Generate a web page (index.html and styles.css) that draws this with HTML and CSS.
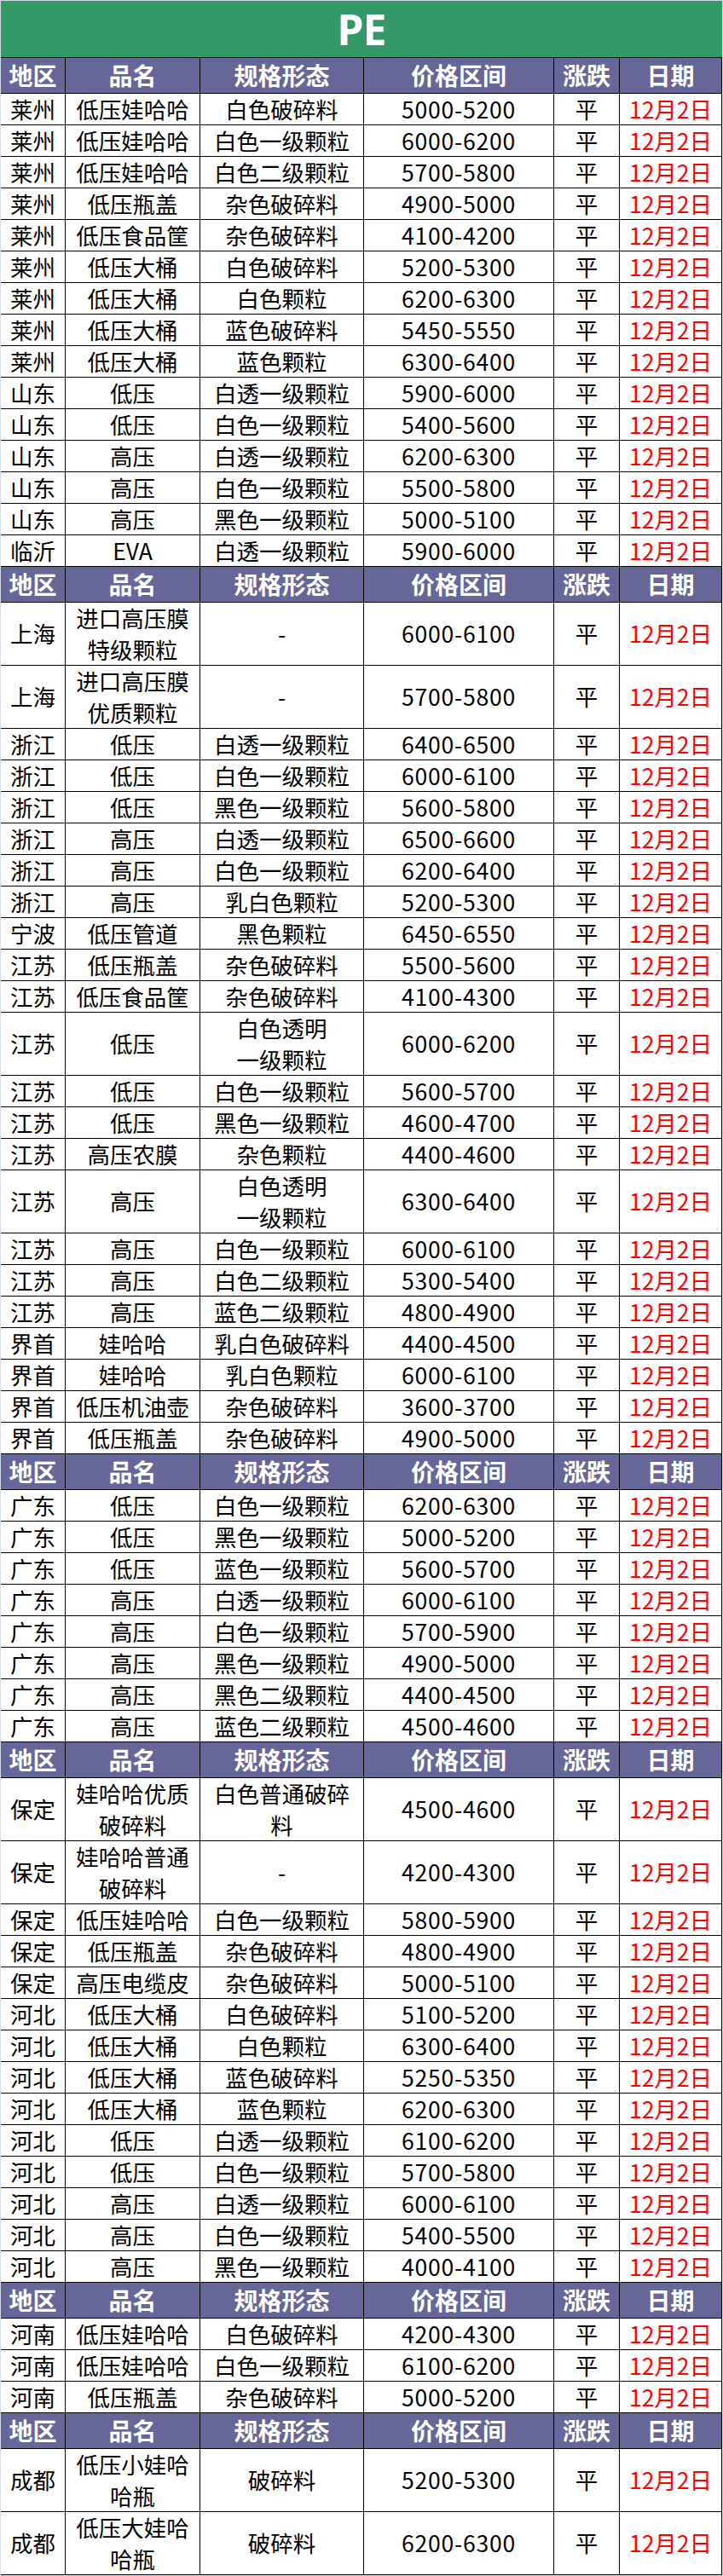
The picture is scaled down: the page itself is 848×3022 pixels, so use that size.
FILE: index.html
```html
<!DOCTYPE html>
<html lang="zh-CN">
<head>
<meta charset="utf-8">
<title>PE</title>
<link rel="stylesheet" href="styles.css">
</head>
<body>
<div class="sheet">
  <div class="title">PE</div>

  <div class="row hd"><div>地区</div><div>品名</div><div>规格形态</div><div>价格区间</div><div>涨跌</div><div>日期</div></div>
  <div class="row"><div>莱州</div><div>低压娃哈哈</div><div>白色破碎料</div><div class="num">5000-5200</div><div>平</div><div class="date">12月2日</div></div>
  <div class="row"><div>莱州</div><div>低压娃哈哈</div><div>白色一级颗粒</div><div class="num">6000-6200</div><div>平</div><div class="date">12月2日</div></div>
  <div class="row"><div>莱州</div><div>低压娃哈哈</div><div>白色二级颗粒</div><div class="num">5700-5800</div><div>平</div><div class="date">12月2日</div></div>
  <div class="row"><div>莱州</div><div>低压瓶盖</div><div>杂色破碎料</div><div class="num">4900-5000</div><div>平</div><div class="date">12月2日</div></div>
  <div class="row"><div>莱州</div><div>低压食品筐</div><div>杂色破碎料</div><div class="num">4100-4200</div><div>平</div><div class="date">12月2日</div></div>
  <div class="row"><div>莱州</div><div>低压大桶</div><div>白色破碎料</div><div class="num">5200-5300</div><div>平</div><div class="date">12月2日</div></div>
  <div class="row"><div>莱州</div><div>低压大桶</div><div>白色颗粒</div><div class="num">6200-6300</div><div>平</div><div class="date">12月2日</div></div>
  <div class="row"><div>莱州</div><div>低压大桶</div><div>蓝色破碎料</div><div class="num">5450-5550</div><div>平</div><div class="date">12月2日</div></div>
  <div class="row"><div>莱州</div><div>低压大桶</div><div>蓝色颗粒</div><div class="num">6300-6400</div><div>平</div><div class="date">12月2日</div></div>
  <div class="row"><div>山东</div><div>低压</div><div>白透一级颗粒</div><div class="num">5900-6000</div><div>平</div><div class="date">12月2日</div></div>
  <div class="row"><div>山东</div><div>低压</div><div>白色一级颗粒</div><div class="num">5400-5600</div><div>平</div><div class="date">12月2日</div></div>
  <div class="row"><div>山东</div><div>高压</div><div>白透一级颗粒</div><div class="num">6200-6300</div><div>平</div><div class="date">12月2日</div></div>
  <div class="row"><div>山东</div><div>高压</div><div>白色一级颗粒</div><div class="num">5500-5800</div><div>平</div><div class="date">12月2日</div></div>
  <div class="row"><div>山东</div><div>高压</div><div>黑色一级颗粒</div><div class="num">5000-5100</div><div>平</div><div class="date">12月2日</div></div>
  <div class="row"><div>临沂</div><div>EVA</div><div>白透一级颗粒</div><div class="num">5900-6000</div><div>平</div><div class="date">12月2日</div></div>

  <div class="row hd"><div>地区</div><div>品名</div><div>规格形态</div><div>价格区间</div><div>涨跌</div><div>日期</div></div>
  <div class="row dbl"><div>上海</div><div>进口高压膜<br>特级颗粒</div><div>-</div><div class="num">6000-6100</div><div>平</div><div class="date">12月2日</div></div>
  <div class="row dbl"><div>上海</div><div>进口高压膜<br>优质颗粒</div><div>-</div><div class="num">5700-5800</div><div>平</div><div class="date">12月2日</div></div>
  <div class="row"><div>浙江</div><div>低压</div><div>白透一级颗粒</div><div class="num">6400-6500</div><div>平</div><div class="date">12月2日</div></div>
  <div class="row"><div>浙江</div><div>低压</div><div>白色一级颗粒</div><div class="num">6000-6100</div><div>平</div><div class="date">12月2日</div></div>
  <div class="row"><div>浙江</div><div>低压</div><div>黑色一级颗粒</div><div class="num">5600-5800</div><div>平</div><div class="date">12月2日</div></div>
  <div class="row"><div>浙江</div><div>高压</div><div>白透一级颗粒</div><div class="num">6500-6600</div><div>平</div><div class="date">12月2日</div></div>
  <div class="row"><div>浙江</div><div>高压</div><div>白色一级颗粒</div><div class="num">6200-6400</div><div>平</div><div class="date">12月2日</div></div>
  <div class="row"><div>浙江</div><div>高压</div><div>乳白色颗粒</div><div class="num">5200-5300</div><div>平</div><div class="date">12月2日</div></div>
  <div class="row"><div>宁波</div><div>低压管道</div><div>黑色颗粒</div><div class="num">6450-6550</div><div>平</div><div class="date">12月2日</div></div>
  <div class="row"><div>江苏</div><div>低压瓶盖</div><div>杂色破碎料</div><div class="num">5500-5600</div><div>平</div><div class="date">12月2日</div></div>
  <div class="row"><div>江苏</div><div>低压食品筐</div><div>杂色破碎料</div><div class="num">4100-4300</div><div>平</div><div class="date">12月2日</div></div>
  <div class="row dbl"><div>江苏</div><div>低压</div><div>白色透明<br>一级颗粒</div><div class="num">6000-6200</div><div>平</div><div class="date">12月2日</div></div>
  <div class="row"><div>江苏</div><div>低压</div><div>白色一级颗粒</div><div class="num">5600-5700</div><div>平</div><div class="date">12月2日</div></div>
  <div class="row"><div>江苏</div><div>低压</div><div>黑色一级颗粒</div><div class="num">4600-4700</div><div>平</div><div class="date">12月2日</div></div>
  <div class="row"><div>江苏</div><div>高压农膜</div><div>杂色颗粒</div><div class="num">4400-4600</div><div>平</div><div class="date">12月2日</div></div>
  <div class="row dbl"><div>江苏</div><div>高压</div><div>白色透明<br>一级颗粒</div><div class="num">6300-6400</div><div>平</div><div class="date">12月2日</div></div>
  <div class="row"><div>江苏</div><div>高压</div><div>白色一级颗粒</div><div class="num">6000-6100</div><div>平</div><div class="date">12月2日</div></div>
  <div class="row"><div>江苏</div><div>高压</div><div>白色二级颗粒</div><div class="num">5300-5400</div><div>平</div><div class="date">12月2日</div></div>
  <div class="row"><div>江苏</div><div>高压</div><div>蓝色二级颗粒</div><div class="num">4800-4900</div><div>平</div><div class="date">12月2日</div></div>
  <div class="row"><div>界首</div><div>娃哈哈</div><div>乳白色破碎料</div><div class="num">4400-4500</div><div>平</div><div class="date">12月2日</div></div>
  <div class="row"><div>界首</div><div>娃哈哈</div><div>乳白色颗粒</div><div class="num">6000-6100</div><div>平</div><div class="date">12月2日</div></div>
  <div class="row"><div>界首</div><div>低压机油壶</div><div>杂色破碎料</div><div class="num">3600-3700</div><div>平</div><div class="date">12月2日</div></div>
  <div class="row"><div>界首</div><div>低压瓶盖</div><div>杂色破碎料</div><div class="num">4900-5000</div><div>平</div><div class="date">12月2日</div></div>

  <div class="row hd"><div>地区</div><div>品名</div><div>规格形态</div><div>价格区间</div><div>涨跌</div><div>日期</div></div>
  <div class="row"><div>广东</div><div>低压</div><div>白色一级颗粒</div><div class="num">6200-6300</div><div>平</div><div class="date">12月2日</div></div>
  <div class="row"><div>广东</div><div>低压</div><div>黑色一级颗粒</div><div class="num">5000-5200</div><div>平</div><div class="date">12月2日</div></div>
  <div class="row"><div>广东</div><div>低压</div><div>蓝色一级颗粒</div><div class="num">5600-5700</div><div>平</div><div class="date">12月2日</div></div>
  <div class="row"><div>广东</div><div>高压</div><div>白透一级颗粒</div><div class="num">6000-6100</div><div>平</div><div class="date">12月2日</div></div>
  <div class="row"><div>广东</div><div>高压</div><div>白色一级颗粒</div><div class="num">5700-5900</div><div>平</div><div class="date">12月2日</div></div>
  <div class="row"><div>广东</div><div>高压</div><div>黑色一级颗粒</div><div class="num">4900-5000</div><div>平</div><div class="date">12月2日</div></div>
  <div class="row"><div>广东</div><div>高压</div><div>黑色二级颗粒</div><div class="num">4400-4500</div><div>平</div><div class="date">12月2日</div></div>
  <div class="row"><div>广东</div><div>高压</div><div>蓝色二级颗粒</div><div class="num">4500-4600</div><div>平</div><div class="date">12月2日</div></div>

  <div class="row hd"><div>地区</div><div>品名</div><div>规格形态</div><div>价格区间</div><div>涨跌</div><div>日期</div></div>
  <div class="row dbl"><div>保定</div><div>娃哈哈优质<br>破碎料</div><div>白色普通破碎<br>料</div><div class="num">4500-4600</div><div>平</div><div class="date">12月2日</div></div>
  <div class="row dbl"><div>保定</div><div>娃哈哈普通<br>破碎料</div><div>-</div><div class="num">4200-4300</div><div>平</div><div class="date">12月2日</div></div>
  <div class="row"><div>保定</div><div>低压娃哈哈</div><div>白色一级颗粒</div><div class="num">5800-5900</div><div>平</div><div class="date">12月2日</div></div>
  <div class="row"><div>保定</div><div>低压瓶盖</div><div>杂色破碎料</div><div class="num">4800-4900</div><div>平</div><div class="date">12月2日</div></div>
  <div class="row"><div>保定</div><div>高压电缆皮</div><div>杂色破碎料</div><div class="num">5000-5100</div><div>平</div><div class="date">12月2日</div></div>
  <div class="row"><div>河北</div><div>低压大桶</div><div>白色破碎料</div><div class="num">5100-5200</div><div>平</div><div class="date">12月2日</div></div>
  <div class="row"><div>河北</div><div>低压大桶</div><div>白色颗粒</div><div class="num">6300-6400</div><div>平</div><div class="date">12月2日</div></div>
  <div class="row"><div>河北</div><div>低压大桶</div><div>蓝色破碎料</div><div class="num">5250-5350</div><div>平</div><div class="date">12月2日</div></div>
  <div class="row"><div>河北</div><div>低压大桶</div><div>蓝色颗粒</div><div class="num">6200-6300</div><div>平</div><div class="date">12月2日</div></div>
  <div class="row"><div>河北</div><div>低压</div><div>白透一级颗粒</div><div class="num">6100-6200</div><div>平</div><div class="date">12月2日</div></div>
  <div class="row"><div>河北</div><div>低压</div><div>白色一级颗粒</div><div class="num">5700-5800</div><div>平</div><div class="date">12月2日</div></div>
  <div class="row"><div>河北</div><div>高压</div><div>白透一级颗粒</div><div class="num">6000-6100</div><div>平</div><div class="date">12月2日</div></div>
  <div class="row"><div>河北</div><div>高压</div><div>白色一级颗粒</div><div class="num">5400-5500</div><div>平</div><div class="date">12月2日</div></div>
  <div class="row"><div>河北</div><div>高压</div><div>黑色一级颗粒</div><div class="num">4000-4100</div><div>平</div><div class="date">12月2日</div></div>

  <div class="row hd"><div>地区</div><div>品名</div><div>规格形态</div><div>价格区间</div><div>涨跌</div><div>日期</div></div>
  <div class="row"><div>河南</div><div>低压娃哈哈</div><div>白色破碎料</div><div class="num">4200-4300</div><div>平</div><div class="date">12月2日</div></div>
  <div class="row"><div>河南</div><div>低压娃哈哈</div><div>白色一级颗粒</div><div class="num">6100-6200</div><div>平</div><div class="date">12月2日</div></div>
  <div class="row"><div>河南</div><div>低压瓶盖</div><div>杂色破碎料</div><div class="num">5000-5200</div><div>平</div><div class="date">12月2日</div></div>

  <div class="row hd"><div>地区</div><div>品名</div><div>规格形态</div><div>价格区间</div><div>涨跌</div><div>日期</div></div>
  <div class="row dbl"><div>成都</div><div>低压小娃哈<br>哈瓶</div><div>破碎料</div><div class="num">5200-5300</div><div>平</div><div class="date">12月2日</div></div>
  <div class="row dbl"><div>成都</div><div>低压大娃哈<br>哈瓶</div><div>破碎料</div><div class="num">6200-6300</div><div>平</div><div class="date">12月2日</div></div>
</div>
</body>
</html>
```

FILE: styles.css
```css
html, body {
  margin: 0;
  padding: 0;
}

body {
  background: #d3dbe7;
  font-family: "Noto Sans CJK SC", "Noto Sans", sans-serif;
  color: #000;
}

.sheet {
  width: 846px;
  margin: 1px;
  background: #fff;
}

.title {
  box-sizing: border-box;
  height: 67px;
  background: #339966;
  border-bottom: 1px solid #000;
  color: #fff;
  font-size: 50px;
  font-weight: bold;
  letter-spacing: -1px;
  display: flex;
  align-items: center;
  justify-content: center;
  font-family: "Noto Sans", "Noto Sans CJK SC", sans-serif;
}

.row {
  display: grid;
  grid-template-columns: 76px 158px 192px 223px 77px 120px;
  height: 37px;
  font-size: 26.5px;
}

.row > div {
  box-sizing: border-box;
  border-right: 1px solid #000;
  border-bottom: 1px solid #000;
  display: flex;
  flex-direction: column;
  align-items: center;
  justify-content: center;
  text-align: center;
  line-height: 36px;
  white-space: nowrap;
}

.row.dbl {
  height: 74px;
}

.row.dbl > div {
  line-height: 36.5px;
}

.row.hd {
  height: 42px;
  background: #666699;
  color: #fff;
  font-weight: bold;
  font-size: 28px;
}

.row.hd > div {
  line-height: 41px;
}

.num {
  letter-spacing: 0.8px;
}

.date {
  color: #ff0000;
}
```
